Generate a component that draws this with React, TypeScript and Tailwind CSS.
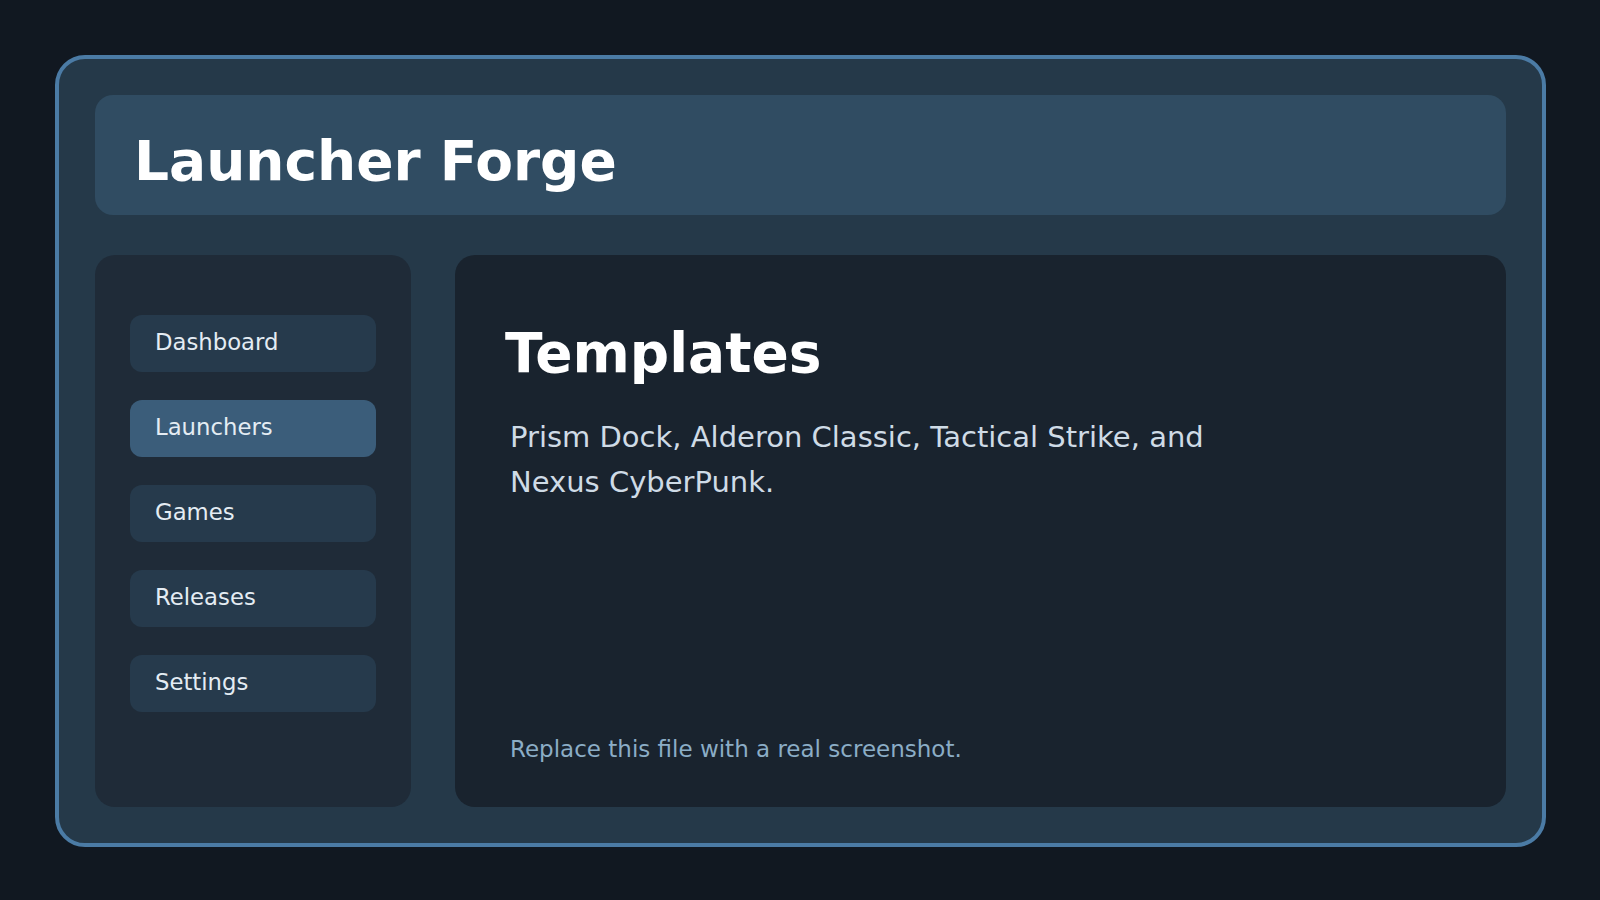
// Launcher Forge – placeholder shell: header, side nav, templates panel

const navItems = ['Dashboard', 'Launchers', 'Games', 'Releases', 'Settings'];
const activeItem = 'Launchers';

export default function App() {
  return (
    <div
      className="h-screen w-full bg-[#111821] pl-[55px] pr-[54px] pt-[55px] pb-[53px]"
      style={{ fontFamily: '"DejaVu Sans", "Liberation Sans", sans-serif' }}
    >
      <div className="flex h-full flex-col gap-[40px] rounded-[30px] border-[4px] border-[#4b7ba5] bg-[#253949] p-[36px]">
        {/* Header */}
        <header className="h-[120px] shrink-0 rounded-[18px] bg-[#304c62] pl-[39px] pt-[39px]">
          <h1 className="text-[55px] font-bold leading-none text-white">Launcher Forge</h1>
        </header>

        {/* Body */}
        <div className="flex min-h-0 flex-1 gap-[44px]">
          {/* Sidebar */}
          <nav className="flex w-[316px] shrink-0 flex-col gap-[28px] rounded-[20px] bg-[#1f2b38] px-[35px] pt-[60px]">
            {navItems.map((item) => (
              <div
                key={item}
                className={`flex h-[57px] items-center rounded-[12px] pl-[25px] pb-[2px] text-[22.75px] leading-none text-[#e4ecf3] ${
                  item === activeItem ? 'bg-[#3b5d7a]' : 'bg-[#263a4c]'
                }`}
              >
                {item}
              </div>
            ))}
          </nav>

          {/* Main panel */}
          <main className="flex flex-1 flex-col rounded-[20px] bg-[#19232e] pl-[50px] pt-[71px] pb-[43px]">
            <h2 className="text-[55px] font-bold leading-none text-white">Templates</h2>
            <p className="ml-[5px] mt-[34px] max-w-[760px] text-[29px] leading-[45px] text-[#cfdbe6]">
              Prism Dock, Alderon Classic, Tactical Strike, and Nexus CyberPunk.
            </p>
            <p className="ml-[5px] mt-auto text-[23px] leading-[1.2] text-[#8badc6]">
              Replace this file with a real screenshot.
            </p>
          </main>
        </div>
      </div>
    </div>
  );
}
